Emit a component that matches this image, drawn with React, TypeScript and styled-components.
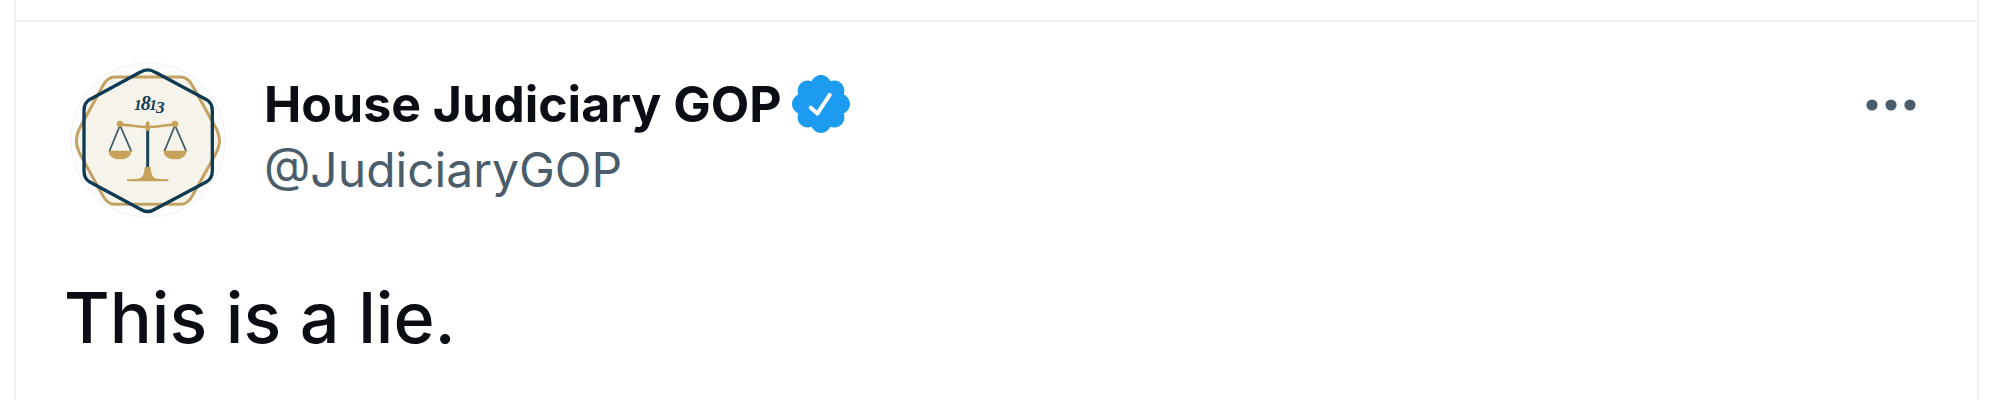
import React from "react";
import styled, { createGlobalStyle } from "styled-components";

const GlobalStyle = createGlobalStyle`
  * { box-sizing: border-box; }
  body {
    margin: 0;
    background: #fff;
    color: #0a0d14;
    font-family: Inter, "Liberation Sans", sans-serif;
  }
`;

const Column = styled.main`
  min-height: 100vh;
  margin: 0 21px 0 14px;
  border: solid #edf2f2;
  border-width: 0 2px;
  padding-top: 20px;
`;

const Tweet = styled.article`
  border-top: 2px solid #edf2f2;
  padding: 40px 54px 32px 48px;
`;

const Header = styled.header`
  display: flex;
  align-items: flex-start;
  padding-left: 6px;
`;

const Avatar = styled.svg`
  flex: none;
  width: 156px;
  height: 156px;
`;

const Author = styled.div`
  flex: 1;
  min-width: 0;
  padding: 8px 0 0 38px;
`;

const NameRow = styled.div`
  display: flex;
  align-items: center;
  gap: 10px;
`;

const Name = styled.a`
  color: inherit;
  font-size: 50px;
  font-weight: 700;
  line-height: 68px;
  text-decoration: none;
`;

const Handle = styled.a`
  display: block;
  color: #4b5c6a;
  font-size: 48px;
  line-height: 64px;
  text-decoration: none;
`;

const Badge = styled.svg`
  flex: none;
  width: 58px;
  height: 58px;
`;

const MoreButton = styled.button`
  display: flex;
  flex: none;
  margin-top: 32px;
  border: 0;
  padding: 0;
  background: none;
  color: #4b5c6a;
  cursor: pointer;
`;

const Body = styled.p`
  margin: 56px 0 0;
  font-size: 70px;
  font-weight: 500;
  line-height: 88px;
`;

function Pan({ x }: { x: number }) {
  return (
    <g transform={`translate(${x} 0)`}>
      <path d="M0 212L-32 290M0 212L34 290" fill="none" stroke="#3c5a66" strokeWidth="5" />
      <path d="M-35 288H35Q32 314 0 314Q-32 314 -35 288Z" fill="#c5a15a" />
      <circle cy="208" r="10" fill="#c5a15a" />
    </g>
  );
}

const goldHexagon =
  "M165 67H361Q384 67 398 94L469 222Q488 258 469 294L398 422Q384 449 361 449H165Q142 449 128 422L58 294Q40 258 58 222L128 94Q142 67 165 67Z";
const navyHexagon =
  "M240 53Q263 38 286 53L440 135Q457 145 457 168V348Q457 371 440 381L286 463Q263 478 240 463L88 381Q72 371 72 348V168Q72 145 88 135Z";

function Seal() {
  return (
    <Avatar viewBox="30 22 468 468" role="img" aria-label="House Judiciary GOP">
      <circle cx="264" cy="256" r="232" fill="#fdfdfd" stroke="#f1f1f3" strokeWidth="3" />
      <g fill="#f6f4ea">
        <path d={goldHexagon} />
        <path d={navyHexagon} />
      </g>
      <g fill="none" strokeLinejoin="round">
        <path d={goldHexagon} stroke="#c2a263" strokeWidth="9" />
        <path d={navyHexagon} stroke="#0f3a54" strokeWidth="10" />
      </g>
      <text
        y="165"
        fill="#123b55"
        fontFamily="'Liberation Serif', serif"
        fontStyle="italic"
        fontWeight="700"
      >
        <tspan x="222" fontSize="46">1</tspan>
        <tspan x="242" fontSize="60">8</tspan>
        <tspan x="268" fontSize="46">1</tspan>
        <tspan x="288" y="174" fontSize="52">3</tspan>
      </text>
      <path d="M263 220V342" stroke="#1c4458" strokeWidth="9" />
      <path d="M180 211C205 208 228 218 263 217C298 218 321 208 346 211" fill="none" stroke="#c5a15a" strokeWidth="8" />
      <path d="M257 228V208Q257 200 263 199Q269 200 269 208V228Z" fill="#c5a15a" />
      <Pan x={180} />
      <Pan x={345} />
      <path d="M254 337H272Q273 367 286 371Q300 374 325 374V380H201V374Q226 374 240 371Q253 367 254 337Z" fill="#c5a15a" />
    </Avatar>
  );
}

function VerifiedBadge() {
  return (
    <Badge viewBox="1.75 1.75 20.5 20.5" role="img" aria-label="Verified account">
      <path
        fill="#1d9bf0"
        d="M22.25 12c0-1.43-.88-2.67-2.19-3.34.46-1.39.2-2.9-.81-3.91s-2.52-1.27-3.91-.81c-.66-1.31-1.91-2.19-3.34-2.19s-2.67.88-3.33 2.19c-1.4-.46-2.91-.2-3.92.81s-1.26 2.52-.8 3.91c-1.31.67-2.2 1.91-2.2 3.34s.89 2.67 2.2 3.34c-.46 1.39-.21 2.9.8 3.91s2.52 1.26 3.91.81c.67 1.31 1.91 2.19 3.34 2.19s2.68-.88 3.34-2.19c1.39.45 2.9.2 3.91-.81s1.27-2.52.81-3.91c1.31-.67 2.19-1.91 2.19-3.34z"
      />
      <path d="M8.4 13.3L10.7 15.4L15.1 8.8" fill="none" stroke="#fff" strokeWidth="1.4" strokeLinecap="round" strokeLinejoin="round" />
    </Badge>
  );
}

export default function App() {
  return (
    <>
      <GlobalStyle />
      <Column>
        <Tweet>
          <Header>
            <Seal />
            <Author>
              <NameRow>
                <Name href="#profile">House Judiciary GOP</Name>
                <VerifiedBadge />
              </NameRow>
              <Handle href="#profile">@JudiciaryGOP</Handle>
            </Author>
            <MoreButton type="button" aria-label="More">
              <svg width="64" height="22" viewBox="0 0 64 22" fill="currentColor" aria-hidden="true">
                <circle cx="13" cy="11" r="5.6" />
                <circle cx="32" cy="11" r="5.6" />
                <circle cx="51" cy="11" r="5.6" />
              </svg>
            </MoreButton>
          </Header>
          <Body>This is a lie.</Body>
        </Tweet>
      </Column>
    </>
  );
}
